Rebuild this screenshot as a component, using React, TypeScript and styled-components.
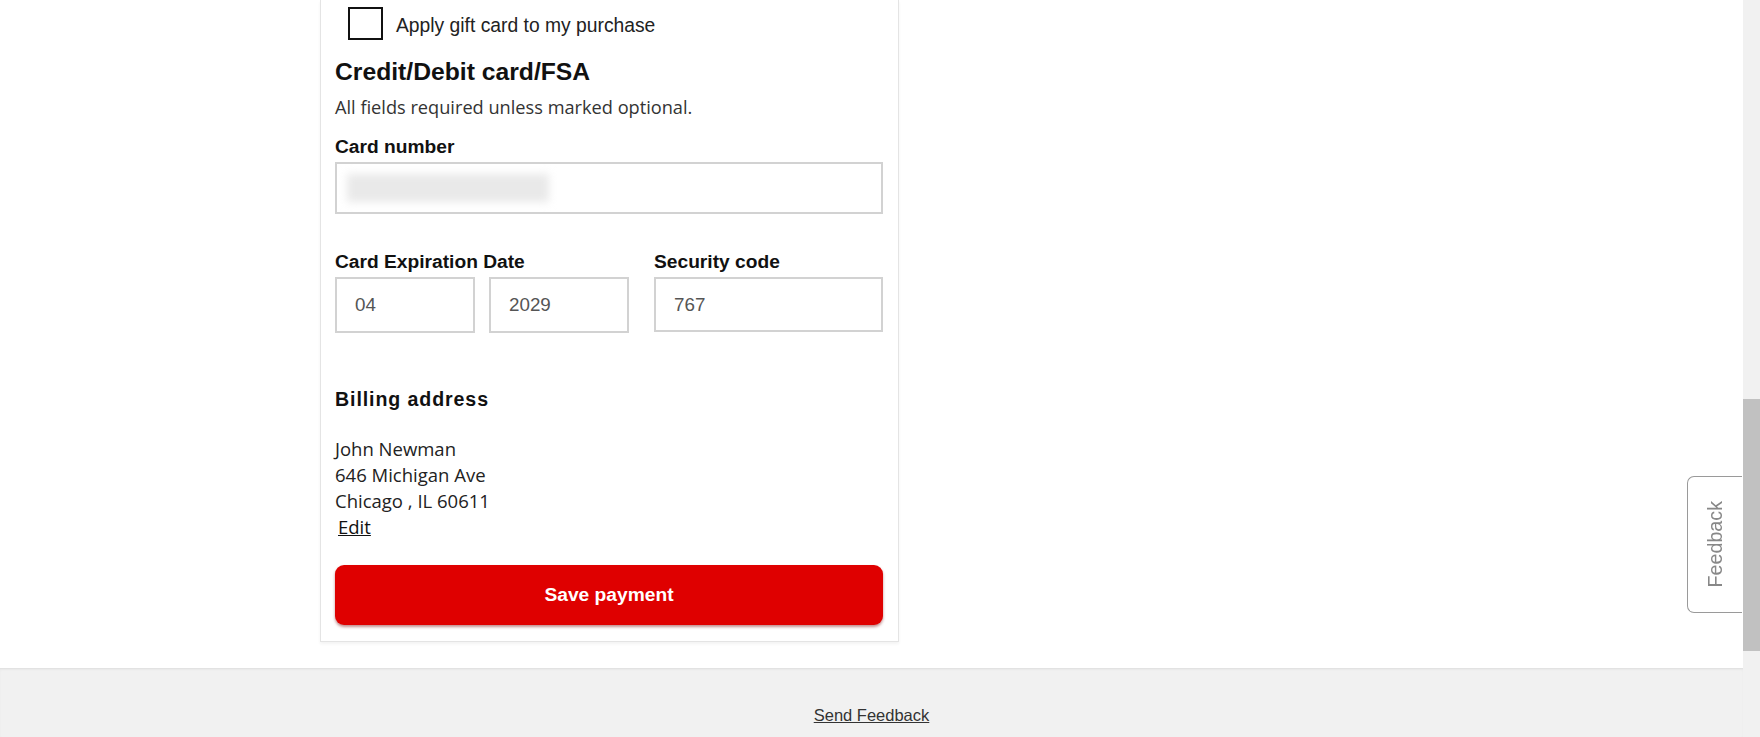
import React from 'react';
import styled, { createGlobalStyle } from 'styled-components';

const GlobalStyle = createGlobalStyle`
  html, body {
    margin: 0;
    padding: 0;
    background: #ffffff;
  }
  body {
    font-family: 'Liberation Sans', Arial, sans-serif;
    color: #111;
  }
`;

const Page = styled.div`
  position: relative;
  display: flex;
  width: 1760px;
  height: 737px;
  overflow: hidden;
`;

const Main = styled.div`
  flex: 1;
  display: flex;
  flex-direction: column;
`;

const Content = styled.div`
  height: 668px;
  background: #fff;
  padding-left: 320px;
`;

const Panel = styled.section`
  width: 548px;
  padding: 0 15px 16px 14px;
  border: 1px solid #e4e4e4;
  border-top: none;
  background: #fff;
  box-shadow: 0 2px 3px rgba(0, 0, 0, 0.05);
  display: flex;
  flex-direction: column;
`;

const GiftRow = styled.label`
  margin-top: 6px;
  height: 34px;
  display: flex;
  align-items: center;
  gap: 13px;
  padding-left: 13px;
  font-size: 19.3px;
  color: #222;
`;

const GiftText = styled.span`
  line-height: 29px;
  padding-top: 5px;
`;

const CheckBox = styled.span`
  width: 31px;
  height: 29px;
  border: 2px solid #111;
  flex: none;
`;

const Heading = styled.h2`
  margin: 17px 0 0;
  font-size: 24.7px;
  line-height: 30px;
  font-weight: 700;
  color: #111;
`;

const Hint = styled.p`
  margin: 8px 0 0;
  font-family: 'Open Sans', sans-serif;
  font-size: 18.2px;
  line-height: 24px;
  color: #333;
`;

const FieldLabel = styled.div<{ $top: number }>`
  margin-top: ${({ $top }) => $top}px;
  font-size: 19.2px;
  line-height: 22px;
  font-weight: 700;
  color: #111;
`;

const Field = styled.div`
  display: flex;
  flex-direction: column;
  gap: 4px;
`;

const Input = styled.input<{ $h: number }>`
  box-sizing: border-box;
  width: 100%;
  height: ${({ $h }) => $h}px;
  border: 2px solid #d2d2d2;
  padding: 0 0 0 18px;
  font-family: 'Liberation Sans', Arial, sans-serif;
  font-size: 18.8px;
  color: #555;
  background: #fff;
  outline: none;
`;

const CardNumberBox = styled.div`
  box-sizing: border-box;
  margin-top: 4px;
  height: 52px;
  border: 2px solid #d2d2d2;
  display: flex;
  align-items: center;
  padding-left: 10px;
`;

const Redacted = styled.span`
  width: 202px;
  height: 28px;
  background: #e9e9e9;
  filter: blur(4px);
`;

const ExpiryRow = styled.div`
  margin-top: 37px;
  display: grid;
  grid-template-columns: 294px 1fr;
  column-gap: 25px;
`;

const DatePair = styled.div`
  display: grid;
  grid-template-columns: 140px 140px;
  column-gap: 14px;
`;

const BillingTitle = styled.h3`
  margin: 54px 0 0;
  font-size: 19.6px;
  line-height: 24px;
  font-weight: 700;
  letter-spacing: 0.9px;
  color: #111;
`;

const Address = styled.div`
  margin-top: 25px;
  font-family: 'Open Sans', sans-serif;
  font-size: 18.5px;
  line-height: 26px;
  color: #222;
`;

const EditLink = styled.a`
  display: inline-block;
  margin-left: 3px;
  color: #111;
  text-decoration: underline;
`;

const SaveButton = styled.button`
  margin-top: 25px;
  height: 60px;
  border: none;
  border-radius: 9px;
  background: #df0000;
  color: #fff;
  font-family: 'Liberation Sans', Arial, sans-serif;
  font-size: 19.2px;
  font-weight: 700;
  box-shadow: 0 2px 3px rgba(120, 0, 0, 0.45);
`;

const Footer = styled.footer`
  flex: 1;
  background: #f1f1f1;
  border-top: 1px solid #e2e2e2;
  box-shadow: inset 0 1px 2px rgba(0, 0, 0, 0.04);
  display: flex;
  justify-content: center;
  padding-top: 36px;
`;

const FooterLink = styled.a`
  font-size: 16.5px;
  line-height: 20px;
  color: #333;
  text-decoration: underline;
`;

const Scrollbar = styled.div`
  width: 17px;
  background: #f1f1f1;
  display: flex;
  flex-direction: column;
`;

const Thumb = styled.div`
  margin-top: 399px;
  height: 252px;
  background: #c1c1c1;
`;

const FeedbackTab = styled.div`
  position: absolute;
  left: 1687px;
  top: 476px;
  width: 55px;
  height: 137px;
  box-sizing: border-box;
  border: 1px solid #9a9a9a;
  border-right: none;
  border-radius: 7px 0 0 7px;
  background: #fff;
  display: flex;
  align-items: center;
  justify-content: center;
`;

const FeedbackText = styled.span`
  writing-mode: vertical-rl;
  transform: rotate(180deg);
  font-size: 19.7px;
  color: #888;
`;

export default function App() {
  return (
    <>
      <GlobalStyle />
      <Page>
        <Main>
          <Content>
            <Panel>
              <GiftRow>
                <CheckBox />
                <GiftText>Apply gift card to my purchase</GiftText>
              </GiftRow>
              <Heading>Credit/Debit card/FSA</Heading>
              <Hint>All fields required unless marked optional.</Hint>

              <FieldLabel $top={17}>Card number</FieldLabel>
              <CardNumberBox>
                <Redacted />
              </CardNumberBox>

              <ExpiryRow>
                <Field>
                  <FieldLabel $top={0}>Card Expiration Date</FieldLabel>
                  <DatePair>
                    <Input $h={56} readOnly defaultValue="04" />
                    <Input $h={56} readOnly defaultValue="2029" />
                  </DatePair>
                </Field>
                <Field>
                  <FieldLabel $top={0}>Security code</FieldLabel>
                  <Input $h={55} readOnly defaultValue="767" />
                </Field>
              </ExpiryRow>

              <BillingTitle>Billing address</BillingTitle>
              <Address>
                <div>John Newman</div>
                <div>646 Michigan Ave</div>
                <div>Chicago , IL 60611</div>
                <EditLink href="#">Edit</EditLink>
              </Address>

              <SaveButton type="button">Save payment</SaveButton>
            </Panel>
          </Content>
          <Footer>
            <FooterLink href="#">Send Feedback</FooterLink>
          </Footer>
        </Main>
        <Scrollbar>
          <Thumb />
        </Scrollbar>
        <FeedbackTab>
          <FeedbackText>Feedback</FeedbackText>
        </FeedbackTab>
      </Page>
    </>
  );
}
